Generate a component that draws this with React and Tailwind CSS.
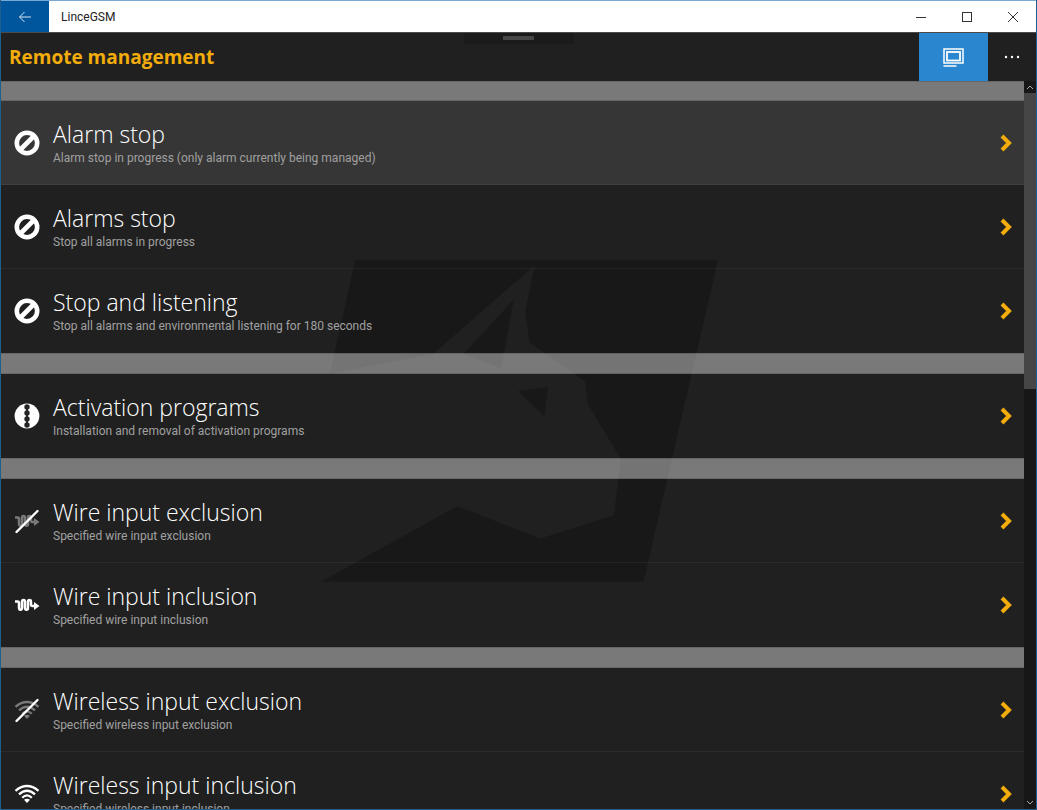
import React from 'react';

const BanIcon = () => (
  <svg viewBox="0 0 26 26" className="size-[26px]" fill="none" stroke="#fff">
    <circle cx="13" cy="13" r="10.2" strokeWidth="4.6" />
    <path d="M7 19L19 7" strokeWidth="4.6" />
  </svg>
);

const ProgramsIcon = () => (
  <svg viewBox="0 0 26 26" className="size-[26px]">
    <circle cx="13" cy="13" r="12.4" fill="#fff" />
    <g fill="#262626">
      <rect x="12" y="2.5" width="2" height="21" />
      <circle cx="13" cy="4" r="2.7" />
      <circle cx="13" cy="10" r="2.7" />
      <circle cx="13" cy="16" r="2.7" />
      <circle cx="13" cy="22" r="2.7" />
    </g>
  </svg>
);

const Slash = () => <path d="M2.5 24L23.5 3" stroke="#fff" strokeWidth="2.4" strokeLinecap="round" />;

const WireIcon = ({ off }) => (
  <svg viewBox="0 0 26 26" className="size-[26px]" fill="none">
    <g opacity={off ? 0.4 : 1}>
      <path
        d="M1 9.5H3.5Q5 9.5 5 11V15.5Q5 17.8 6.5 17.8T8 15.5V9.8Q8 8 9.5 8T11 9.8V15.5Q11 17.8 12.5 17.8T14 15.5V9.8Q14 8 15.5 8T17 9.8V12.5Q17 14 18.5 14H20.5"
        stroke="#fff"
        strokeWidth="2.5"
      />
      <path d="M20 10L25.5 14L20 18Z" fill="#fff" />
    </g>
    {off && <Slash />}
  </svg>
);

const WifiIcon = ({ off }) => (
  <svg viewBox="0 0 26 26" className="size-[26px]" fill="none">
    <g opacity={off ? 0.4 : 1} stroke="#fff" strokeWidth="2.3">
      <path d="M1.5 9.8Q13 0.3 24.5 9.8" />
      <path d="M5 13.3Q13 6.3 21 13.3" />
      <path d="M8.2 16.7Q13 12 17.8 16.7" />
      <path d="M10 18.8Q13 16.5 16 18.8L13 22Z" fill="#fff" stroke="none" />
    </g>
    {off && <Slash />}
  </svg>
);

const groups = [
  [
    { title: 'Alarm stop', text: 'Alarm stop in progress (only alarm currently being managed)', icon: <BanIcon />, active: true },
    { title: 'Alarms stop', text: 'Stop all alarms in progress', icon: <BanIcon /> },
    { title: 'Stop and listening', text: 'Stop all alarms and environmental listening for 180 seconds', icon: <BanIcon /> },
  ],
  [
    { title: 'Activation programs', text: 'Installation and removal of activation programs', icon: <ProgramsIcon /> },
  ],
  [
    { title: 'Wire input exclusion', text: 'Specified wire input exclusion', icon: <WireIcon off /> },
    { title: 'Wire input inclusion', text: 'Specified wire input inclusion', icon: <WireIcon /> },
  ],
  [
    { title: 'Wireless input exclusion', text: 'Specified wireless input exclusion', icon: <WifiIcon off /> },
    { title: 'Wireless input inclusion', text: 'Specified wireless input inclusion', icon: <WifiIcon /> },
  ],
];

const Row = ({ item, last }) => (
  <li>
    <button
      className={`flex h-[84px] w-full items-center pl-[13px] pr-3 text-left ${item.active ? 'bg-white/10' : ''} ${last ? '' : 'border-b border-white/5'}`}
    >
      {item.icon}
      <span className="ml-[13px] flex-1 pb-0.5">
        <span className="block text-[23px] leading-8 font-light text-white">{item.title}</span>
        <span className="block font-['Roboto','Open_Sans',sans-serif] text-[12px] leading-4 text-[#a0a0a0]">{item.text}</span>
      </span>
      <svg viewBox="0 0 12 18" className="h-[18px] w-3" fill="none" stroke="#f2ac0c" strokeWidth="4">
        <path d="M2 2L9 9L2 16" />
      </svg>
    </button>
  </li>
);

// Lynx head logo behind the list
const Watermark = () => (
  <svg
    viewBox="60 56 1195 968"
    className="pointer-events-none absolute top-1/2 left-1/2 w-[398px] -translate-x-1/2 -translate-y-1/2"
    fill="#181818"
  >
    <path d="M166 56H1255L1031 1024H60L472 796L722 893L942 823L964 655L863 487L857 422L690 304L676 212L705 72L400 338L90 398Z" />
    <path d="M642 175L492 338L604 382Z" />
    <path d="M746 438L655 450L733 526Z" />
  </svg>
);

const TitleBar = () => (
  <div className="flex h-8 shrink-0 items-stretch border-t border-[#78a9d4] bg-white text-[#222]">
    <button aria-label="Back" className="flex w-12 items-center justify-center bg-[#00569c]">
      <svg viewBox="0 0 14 12" className="h-3 w-[14px]" fill="none" stroke="#d5e4f1">
        <path d="M13 6H1.5M6.5 1L1.5 6L6.5 11" />
      </svg>
    </button>
    <span className="flex flex-1 items-center pl-3 font-['Roboto','Open_Sans',sans-serif] text-[12px]">LinceGSM</span>
    <button aria-label="Minimize" className="flex w-[46px] items-center justify-center">
      <svg viewBox="0 0 12 12" className="size-3" stroke="#333">
        <path d="M1 6.5H11" />
      </svg>
    </button>
    <button aria-label="Maximize" className="flex w-[46px] items-center justify-center">
      <svg viewBox="0 0 12 12" className="size-3" fill="none" stroke="#333">
        <rect x="1.5" y="1.5" width="9" height="9" />
      </svg>
    </button>
    <button aria-label="Close" className="flex w-[46px] items-center justify-center">
      <svg viewBox="0 0 12 12" className="size-3" stroke="#333">
        <path d="M1 1L11 11M11 1L1 11" />
      </svg>
    </button>
  </div>
);

const Header = () => (
  <header className="relative flex h-[49px] shrink-0 items-stretch border-t border-[#4a4a4a]">
    <div className="absolute top-0 left-1/2 flex h-[11px] w-[110px] -translate-x-1/2 items-start justify-center bg-[#1b1b1b] pt-[3px]">
      <div className="h-1 w-[31px] bg-[#474747]" />
    </div>
    <h1 className="flex flex-1 items-center pl-2 text-[19px] font-bold text-[#f2ac0c]">Remote management</h1>
    <button aria-label="Display" className="flex w-[69px] items-center justify-center bg-[#2986cf]">
      <svg viewBox="0 0 21 19" className="h-[19px] w-[21px]" fill="none" stroke="#fff">
        <rect x="1" y="1" width="19" height="14" strokeWidth="1.5" />
        <rect x="4" y="4" width="13" height="8.5" strokeWidth="1.8" />
        <path d="M0.5 18H13.5" strokeWidth="1.5" />
      </svg>
    </button>
    <button aria-label="More" className="flex w-12 items-center justify-center">
      <svg viewBox="0 0 16 4" className="h-1 w-4" fill="#fff">
        <circle cx="2" cy="2" r="1.2" />
        <circle cx="8" cy="2" r="1.2" />
        <circle cx="14" cy="2" r="1.2" />
      </svg>
    </button>
  </header>
);

const ScrollBar = () => (
  <div className="flex w-3 shrink-0 flex-col bg-[#171717]">
    <button aria-label="Scroll up" className="flex h-3 items-center justify-center">
      <svg viewBox="0 0 8 6" className="h-[6px] w-2" fill="none" stroke="#aaa">
        <path d="M1 5L4 2L7 5" />
      </svg>
    </button>
    <div className="flex-1">
      <div className="h-[42%] bg-[#464646]" />
    </div>
    <button aria-label="Scroll down" className="flex h-3 items-center justify-center">
      <svg viewBox="0 0 8 6" className="h-[6px] w-2" fill="none" stroke="#aaa">
        <path d="M1 1L4 4L7 1" />
      </svg>
    </button>
  </div>
);

export default function App() {
  return (
    <div className="flex h-screen flex-col overflow-hidden border-x border-b border-[#1f5f8f] bg-[#202020] font-['Open_Sans','Noto_Sans',sans-serif]">
      <TitleBar />
      <div className="relative flex min-h-0 flex-1 flex-col">
        <Watermark />
        <Header />
        <main className="relative flex min-h-0 flex-1">
          <div className="flex-1 overflow-hidden">
            {groups.map((items, g) => (
              <section key={g}>
                <div className={`border-y border-black/15 bg-white/40 ${g === 0 ? 'h-5' : 'h-[21px]'}`} />
                <ul>
                  {items.map((item, i) => (
                    <Row key={item.title} item={item} last={i === items.length - 1} />
                  ))}
                </ul>
              </section>
            ))}
          </div>
          <ScrollBar />
        </main>
      </div>
    </div>
  );
}
